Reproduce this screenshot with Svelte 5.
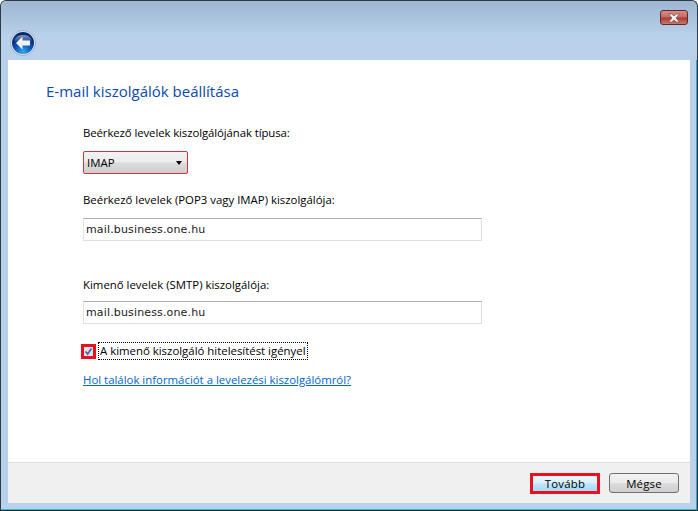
<script>
  let server = 'mail.business.one.hu'
</script>

<div class="window">
  <header class="titlebar">
    <button class="back" aria-label="Vissza">
      <svg width="26" height="26" viewBox="0 0 26 26">
        <defs>
          <radialGradient id="orb" cx="50%" cy="90%" r="70%">
            <stop offset="0" stop-color="#35a6f0" />
            <stop offset="0.55" stop-color="#0b55b8" />
            <stop offset="1" stop-color="#072a70" />
          </radialGradient>
          <linearGradient id="shine" x1="0" y1="0" x2="0" y2="1">
            <stop offset="0" stop-color="#fff" stop-opacity="0.5" />
            <stop offset="1" stop-color="#fff" stop-opacity="0.05" />
          </linearGradient>
        </defs>
        <circle cx="13" cy="13" r="12.5" fill="#dfe8f3" stroke="#8ea3bb" stroke-width="0.8" />
        <circle cx="13" cy="13" r="11" fill="url(#orb)" />
        <path d="M4 10.5 A9.5 8 0 0 1 22 10.5 Q13 14 4 10.5 Z" fill="url(#shine)" />
        <path d="M12.5 6.5 L6 13 L12.5 19.5 L12.5 15.6 L20 15.6 L20 10.6 L12.5 10.6 Z" fill="#f1f1f1" />
      </svg>
    </button>
    <button class="close" aria-label="Bezárás">
      <svg width="14" height="10" viewBox="0 0 14 10">
        <path d="M1.5 1 H4.8 L7 3 L9.2 1 H12.5 L9 5 L12.5 9 H9.2 L7 7 L4.8 9 H1.5 L5 5 Z" fill="#f3f1f1" stroke="#6a4a4e" stroke-width="0.7" />
      </svg>
    </button>
  </header>

  <div class="client">
    <main class="content">
      <h1>E-mail kiszolgálók beállítása</h1>

      <div class="form">
        <label class="first" for="type">Beérkező levelek kiszolgálójának típusa:</label>
        <div class="select" id="type">
          <span>IMAP</span>
          <i class="arrow"></i>
        </div>

        <label class="second" for="in">Beérkező levelek (POP3 vagy IMAP) kiszolgálója:</label>
        <input id="in" value={server} />

        <label class="third" for="out">Kimenő levelek (SMTP) kiszolgálója:</label>
        <input class="out" id="out" value={server} />

        <div class="check-row">
          <span class="check">
            <svg width="9" height="9" viewBox="0 0 9 9">
              <rect width="9" height="9" fill="#dfe3ee" />
              <path d="M1.5 4.5 L3.6 7 L7.5 1.5" fill="none" stroke="#4f64a0" stroke-width="1.8" />
            </svg>
          </span>
          <span class="check-label">A kimenő kiszolgáló hitelesítést igényel</span>
        </div>

        <a class="help" href="#help">Hol találok információt a levelezési kiszolgálómról?</a>
      </div>
    </main>

    <footer class="footer">
      <button class="btn primary">Tovább</button>
      <button class="btn">Mégse</button>
    </footer>
  </div>
</div>

<style>
  :global(body) {
    margin: 0;
  }

  .window {
    box-sizing: border-box;
    width: 698px;
    height: 511px;
    display: flex;
    flex-direction: column;
    padding: 0 7px 7px;
    background: #b9d1ea;
    border: 1px solid #2f3a44;
    border-bottom-color: #10303a;
    border-radius: 6px 6px 0 0;
    box-shadow: inset 0 -1px 0 #3fb4d4, inset -1px 0 0 #3f9fbc;
    font-family: "Open Sans", sans-serif;
    font-size: 11.4px;
    color: #000;
  }

  .titlebar {
    height: 59px;
    flex: none;
    display: flex;
    justify-content: space-between;
    align-items: flex-start;
    margin: 0 -7px;
    padding: 0 9px 0 9px;
    background: linear-gradient(#9db6d2, #b9d1ea 60%);
    border-radius: 6px 6px 0 0;
  }

  .back {
    margin-top: 29px;
    padding: 0;
    border: 0;
    background: none;
    width: 26px;
    height: 26px;
  }

  .close {
    width: 28px;
    height: 15px;
    margin-top: 9px;
    padding: 0;
    display: flex;
    align-items: center;
    justify-content: center;
    border: 1px solid #5e2a2e;
    border-radius: 3px;
    background: linear-gradient(#d98f86 0, #c56a60 48%, #a8382e 52%, #c97a6c 100%);
  }

  .client {
    flex: 1;
    display: flex;
    flex-direction: column;
    min-height: 0;
  }

  .content {
    flex: 1;
    background: #fff;
    padding: 20px 0 0 38px;
  }

  h1 {
    margin: 0;
    font-size: 15px;
    font-weight: 400;
    line-height: 22px;
    color: #0a4bb0;
  }

  .form {
    display: flex;
    flex-direction: column;
    align-items: flex-start;
    padding-left: 37px;
    margin-top: 23px;
  }

  label {
    line-height: 16px;
    display: block;
  }

  .first {
    letter-spacing: -0.1px;
  }

  .select {
    box-sizing: border-box;
    width: 105px;
    height: 23px;
    margin-top: 10px;
    padding: 0 5px 0 3px;
    display: flex;
    align-items: center;
    justify-content: space-between;
    border: 1px solid #c9353d;
    border-radius: 2px;
    background: linear-gradient(#f3f3f3 0, #ebebeb 48%, #dcdcdc 52%, #cfcfcf 100%);
  }

  .arrow {
    width: 0;
    height: 0;
    border-left: 3.5px solid transparent;
    border-right: 3.5px solid transparent;
    border-top: 4px solid #000;
  }

  .second {
    margin-top: 18px;
  }

  .third {
    margin-top: 36px;
  }

  input {
    box-sizing: border-box;
    width: 399px;
    height: 23px;
    margin-top: 10px;
    padding: 0 2px;
    border: 1px solid #dbdfe6;
    border-top-color: #abadb3;
    border-left-color: #e2e3ea;
    font-family: "DejaVu Sans", sans-serif;
    font-size: 11px;
    letter-spacing: 0.15px;
    color: #1a1a1a;
    outline: none;
  }

  .out {
    margin-top: 8px;
  }

  .check-row {
    display: flex;
    align-items: center;
    gap: 3px;
    margin-top: 19px;
    margin-left: -2px;
  }

  .check {
    box-sizing: border-box;
    width: 15px;
    height: 15px;
    display: block;
    line-height: 0;
    border: 3px solid #e8121f;
  }

  .check-label {
    outline: 1px dotted #000;
    outline-offset: 0;
    line-height: 16px;
    padding: 0 1px;
  }

  .help {
    margin-top: 13px;
    color: #0066cc;
    line-height: 16px;
  }

  .footer {
    flex: none;
    box-sizing: border-box;
    height: 41px;
    display: flex;
    justify-content: flex-end;
    align-items: center;
    gap: 9px;
    padding: 0 11px 0 0;
    background: #f0f0f0;
    border-top: 1px solid #dfdfdf;
  }

  .btn {
    box-sizing: border-box;
    width: 70px;
    height: 20px;
    padding: 0;
    font: inherit;
    letter-spacing: 0.2px;
    color: #000;
    border: 1px solid #707070;
    border-radius: 3px;
    background: linear-gradient(#f2f2f2 0, #ebebeb 48%, #dddddd 52%, #cfcfcf 100%);
  }

  .primary {
    border: 3px solid #e8121f;
    border-radius: 0;
    height: 21px;
    background: linear-gradient(#eaf6fd 0, #d9f0fc 48%, #bee6fd 52%, #a7d9f5 100%);
  }
</style>
